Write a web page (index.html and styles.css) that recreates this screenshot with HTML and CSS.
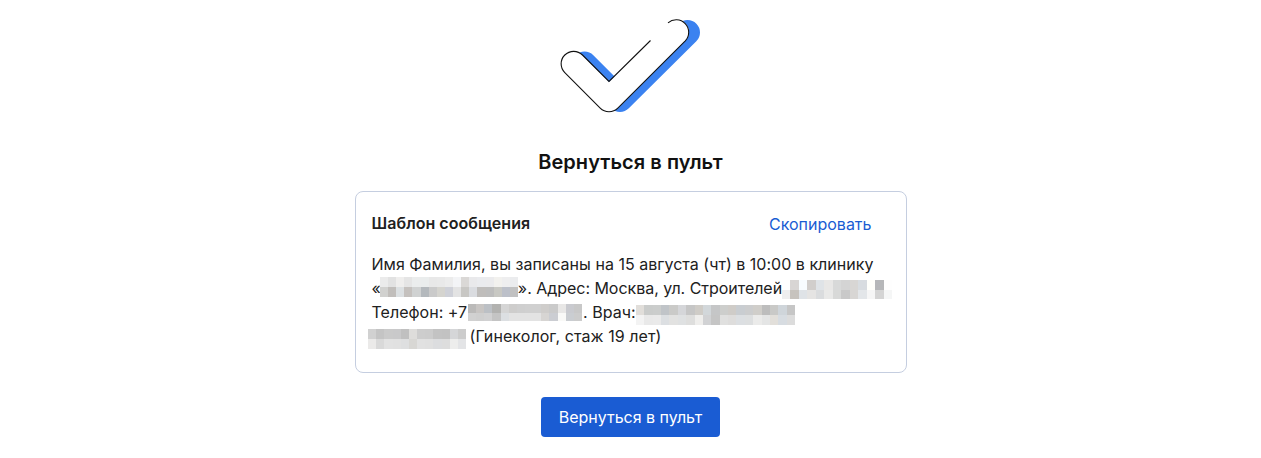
FILE: index.html
```
<!DOCTYPE html>
<html lang="ru">
<head>
  <meta charset="UTF-8">
  <meta name="viewport" content="width=device-width, initial-scale=1.0">
  <title>Вернуться в пульт</title>
  <link rel="stylesheet" href="styles.css">
</head>
<body>
  <main class="page">
    <svg class="check" width="142" height="96" viewBox="560 18 142 96" fill="none">
      <path d="M584.5 64L620 99.5L687.5 32.5" stroke="#3b82f0" stroke-width="25" stroke-linecap="round" stroke-linejoin="round"/>
      <path d="M573.5 64L609 99.5L676.5 32" stroke="#fff" stroke-width="25" stroke-linecap="round" stroke-linejoin="round"/>
      <path d="M650.5 40.5L609 81.5L582.5 55A12.5 12.5 0 0 0 564.8 72.7L600.2 108.1A12.5 12.5 0 0 0 617.8 108.1L685.3 40.8A12.5 12.5 0 0 0 668 22.8" stroke="#111" stroke-width="1.1"/>
    </svg>
    <h1 class="title">Вернуться в пульт</h1>
    <section class="card">
      <div class="card-head">
        <h2>Шаблон сообщения</h2>
        <a class="copy">Скопировать</a>
      </div>
      <div class="message">
        <div class="line">Имя Фамилия, вы записаны на 15 августа (чт) в 10:00 в клинику</div>
        <div class="line">
          <span>«</span>
          <svg class="mask mask-clinic" width="138" height="20" viewBox="0 0 17 2" preserveAspectRatio="none"></svg>
          <span class="address">». Адрес: Москва, ул. Строителей</span>
          <svg class="mask mask-address" width="110" height="19" viewBox="0 0 13 2" preserveAspectRatio="none"></svg>
        </div>
        <div class="line">
          <span>Телефон: +7</span>
          <svg class="mask mask-phone" width="114" height="17" viewBox="0 0 14 2" preserveAspectRatio="none"></svg>
          <span>. Врач:</span>
          <svg class="mask mask-doctor" width="159" height="20" viewBox="0 0 19 2" preserveAspectRatio="none"></svg>
        </div>
        <div class="line">
          <svg class="mask mask-name" width="98" height="20" viewBox="0 0 12 2" preserveAspectRatio="none"></svg>
          <span class="speciality">(Гинеколог, стаж 19 лет)</span>
        </div>
      </div>
    </section>
    <button class="btn">Вернуться в пульт</button>
  </main>
  <script src="script.js"></script>
</body>
</html>
```
FILE: styles.css
```
body {
  margin: 0;
  background: #fff;
  color: #212121;
  font-family: Inter, sans-serif;
  font-size: 16px;
  line-height: 24px;
}
.page {
  display: flex;
  flex-direction: column;
  align-items: center;
  padding-top: 18px;
}
.check {
  display: block;
}
.title {
  margin: 34px 0 15px;
  font-size: 20px;
  font-weight: 600;
  line-height: 28px;
  letter-spacing: 0.05px;
  color: #111;
}
.card {
  box-sizing: border-box;
  width: 552px;
  height: 182px;
  padding: 19px 16px;
  border: 1px solid #c5cee0;
  border-radius: 8px;
}
.card-head {
  display: flex;
  justify-content: space-between;
  padding-right: 18px;
}
.card-head h2 {
  margin: 0;
  font-size: 16px;
  font-weight: 600;
  letter-spacing: 0.04px;
}
.copy {
  padding-top: 1px;
  color: #1a5cd3;
  cursor: pointer;
}
.message {
  margin-top: 16px;
}
.line {
  display: flex;
  height: 24px;
  letter-spacing: 0.016px;
  white-space: nowrap;
}
.mask {
  flex: none;
  shape-rendering: crispEdges;
}
.mask-clinic {
  margin: 1px 0 0 -1px;
}
.address {
  letter-spacing: -0.03px;
}
.mask-address {
  margin-top: 4px;
}
.mask-phone {
  margin: 4px 1px 0;
}
.mask-doctor {
  margin-top: 5px;
}
.mask-name {
  margin: 5px 4px 0 -4px;
}
.speciality {
  letter-spacing: 0.08px;
}
.btn {
  width: 179px;
  height: 40px;
  margin-top: 24px;
  padding: 0;
  border: none;
  border-radius: 4px;
  background: #1a5cd3;
  color: #fff;
  font: inherit;
  letter-spacing: -0.02px;
  cursor: pointer;
}
```
FILE: script.js
```
// cell colours of the hidden fields, top row and bottom row
const masks = {
  'mask-clinic': [
    'ebebeb e2e2e2 efeeed e5e5e5 ebeded eaeded e8e8e8 e9e9e9 ececec f3f4f6 dad8d6 e9e9eb eaebee ebebed f2f1ee eeeeef ebecee',
    'd1d1cf c1bebb dce0e2 c5c1be d0d2d2 b4b9bd cacaca d5d4cf cfd1d8 e3e3e3 c8c7c4 dadce0 bfbdbb bdbdbd c8c8c3 bcc0c9 c1c1c1'
  ],
  'mask-address': [
    'ffffff d8d5d4 f8fcff d1cecc dfe3e7 e8e7e6 d8d9d9 d4d4d4 d8d6d4 d8dce0 fffffb b6b7b9 fefefe',
    'eeeeef c7c3be dfe3e7 e5e4e3 dadcde e9e9e8 d8d9d8 c9c9c9 d8d6d4 e3e6e9 f6f6f6 d4d4d4 f5f6f6'
  ],
  'mask-phone': [
    'bbbab9 c8c5c3 bcc0c5 b2b2b0 d5d5d5 cecdcc cfcfcf d0d0d0 d0d0d0 cfcdcb cacaca e8e7e6 c9cacf c8c8c8',
    'd1d1d1 cfcfcf d1d1d2 c4c4c4 dcdfe2 e3e3e3 e3e3e3 e3e3e3 e3e3e3 d7d5d3 cbcdd2 f9f9f7 cacdd1 cccccc'
  ],
  'mask-doctor': [
    'e1deda cacccb cbcdcc c0c4c8 cacac8 d5d6d9 c6c6c6 cfccc7 d2d7da c5c6c7 cdcecc cfccc8 c9cdd1 cccdce d0ceca bdbdbd c9c9c7 cfd5da c6c6c6',
    'f3f3f3 e9e9e9 eaeaea dcdfe2 e2e2e1 dfe1e2 dededd efeeec d1d2d4 c5c5c5 e0e0df dedddc dcdfe2 dddfe0 ebebea e4e5e5 e2dfda d7dce1 dcdcdc'
  ],
  'mask-name': [
    'd1d1d1 c4c4c4 cacaca c9c9ca c0c0c0 dedddb cdcdcd cccccc c3c3c3 c2c2c2 d5d6d8 cccccc',
    'ebeae9 d9d9d9 e2e2e2 e1e1e1 dedfe0 d8d7d4 e1e1e1 e0e0e0 dcdddf dddddd ededec e3e4e6'
  ]
};

for (const name in masks) {
  const svg = document.querySelector('.' + name);
  masks[name].forEach((row, y) => {
    row.split(' ').forEach((color, x) => {
      const rect = document.createElementNS('http://www.w3.org/2000/svg', 'rect');
      rect.setAttribute('x', x);
      rect.setAttribute('y', y);
      rect.setAttribute('width', 1);
      rect.setAttribute('height', 1);
      rect.setAttribute('fill', '#' + color);
      svg.appendChild(rect);
    });
  });
}
```
